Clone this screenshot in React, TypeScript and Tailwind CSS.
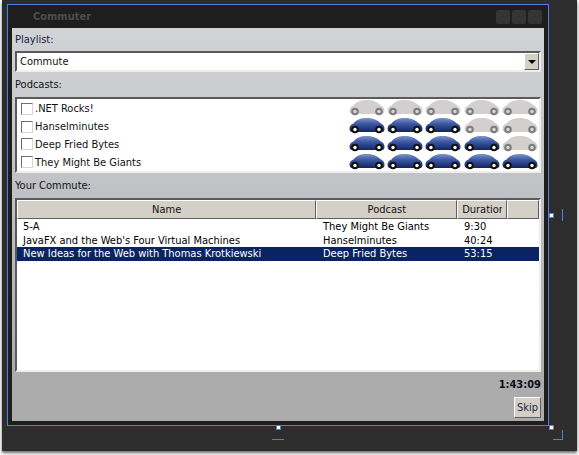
const podcasts = [
  { name: ".NET Rocks!", cars: 0 },
  { name: "Hanselminutes", cars: 3 },
  { name: "Deep Fried Bytes", cars: 4 },
  { name: "They Might Be Giants", cars: 5 },
];

const tracks = [
  { title: "5-A", podcast: "They Might Be Giants", duration: "9:30" },
  { title: "JavaFX and the Web's Four Virtual Machines", podcast: "Hanselminutes", duration: "40:24" },
  { title: "New Ideas for the Web with Thomas Krotkiewski", podcast: "Deep Fried Bytes", duration: "53:15", selected: true },
];

const sunken = "border-2 border-t-[#5a5a5a] border-l-[#5a5a5a] border-r-[#efeee8] border-b-[#efeee8] bg-white";
const raised = "border border-t-white border-l-white border-r-[#5f5f5f] border-b-[#5f5f5f] bg-[#d4d0c8]";

function Car({ on }: { on: boolean }) {
  const tyre = on ? "#111111" : "#7c7c7c";
  return (
    <svg width="36" height="17" viewBox="0 0 36 17" className="shrink-0">
      <path
        d="M0.5 10.5C0.5 8 2 6.5 4.5 5.5C7 2 11 0 18 0C25 0 29 2.5 32 5.5C34.5 6.5 35.5 8.5 35.5 11C35.5 13 34.5 14 33 14H3C1.5 14 0.5 12.5 0.5 10.5Z"
        fill={on ? "url(#car-blue)" : "#d4cfcf"}
      />
      <circle cx="6" cy="11.5" r="3.8" fill={tyre} />
      <circle cx="6" cy="11.5" r="1.7" fill={on ? "#ffffff" : "#d8d8d8"} />
      <circle cx="30" cy="11.5" r="3.8" fill={tyre} />
      <circle cx="30" cy="11.5" r="1.7" fill={on ? "#ffffff" : "#d8d8d8"} />
    </svg>
  );
}

function HeaderCell({ label, className, labelClass }: { label: string; className: string; labelClass?: string }) {
  return (
    <div className={`${raised} h-[19px] flex items-center justify-center whitespace-nowrap ${className}`}>
      <span className={labelClass}>{label}</span>
    </div>
  );
}

function Handle({ className }: { className: string }) {
  return <div className={`absolute w-[5px] h-[5px] bg-white border border-[#4f7fd8] ${className}`} />;
}

export default function App() {
  return (
    <div
      className="relative w-[579px] h-[455px] overflow-hidden bg-white text-[11px] leading-[13px] text-[#111]"
      style={{ fontFamily: '"DejaVu Sans Condensed", "Noto Sans", sans-serif' }}
    >
      <svg width="0" height="0" className="absolute">
        <defs>
          <linearGradient id="car-blue" x1="0" y1="0" x2="0" y2="1">
            <stop offset="0" stopColor="#7f94c8" />
            <stop offset="0.4" stopColor="#3e5aa5" />
            <stop offset="1" stopColor="#12245f" />
          </linearGradient>
        </defs>
      </svg>

      <div className="w-[575px] h-[451px] ml-[2px] bg-[#2d2d2d] shadow-[0_2px_3px_rgba(0,0,0,0.6)] pt-[4px] pl-[5px]">
        <div className="w-[542px] h-[422px] border border-[#4f7fd8] bg-[#1e1e1e] flex flex-col">
          {/* title bar */}
          <div className="h-[23px] shrink-0 flex items-center pl-[25px] pr-[6px]">
            <span className="font-bold text-[#4d4d4d]">Commuter</span>
            <div className="ml-auto flex gap-[2px]">
              <div className="w-[14px] h-[14px] rounded-[2px] bg-[#343434]" />
              <div className="w-[14px] h-[14px] rounded-[2px] bg-[#343434]" />
              <div className="w-[14px] h-[14px] rounded-[2px] bg-[#343434]" />
            </div>
          </div>

          {/* content panel */}
          <div className="mx-[4px] h-[393px] flex flex-col px-[3px] bg-gradient-to-b from-[#d2d3d7] via-[#bfc0c3] via-45% to-[#acacac] to-87%">
            <div className="h-[23px] flex items-center text-[#1a1a3a]">Playlist:</div>

            <div className={`${sunken} h-[21px] flex items-center justify-between pl-[3px] w-[526px]`}>
              <span>Commute</span>
              <div className={`${raised} w-[15px] h-[17px] flex items-center justify-center`}>
                <div className="w-0 h-0 border-x-[4px] border-x-transparent border-t-[4px] border-t-black" />
              </div>
            </div>

            <div className="h-[25px] flex items-center">Podcasts:</div>

            <div className={`${sunken} h-[76px] w-[526px] flex flex-col pl-[4px] pt-[1px]`}>
              {podcasts.map((p) => (
                <div key={p.name} className="h-[18px] flex items-center">
                  <div className="w-[12px] h-[12px] border border-t-[#6e6e6e] border-l-[#6e6e6e] border-r-[#d8d6ce] border-b-[#d8d6ce] bg-white" />
                  <span className="ml-[2px]">{p.name}</span>
                  <div className="ml-auto mr-[1px] flex gap-[2.3px]">
                    {[0, 1, 2, 3, 4].map((i) => (
                      <Car key={i} on={i < p.cars} />
                    ))}
                  </div>
                </div>
              ))}
            </div>

            <div className="h-[25px] flex items-center">Your Commute:</div>

            <div className={`${sunken} h-[174px] w-[526px] flex flex-col`}>
              <div className="flex bg-[#d4d0c8]">
                <HeaderCell label="Name" className="w-[300px]" />
                <HeaderCell label="Podcast" className="w-[141px]" />
                <HeaderCell
                  label="Duration"
                  className="w-[50px] justify-start pl-[4px]"
                  labelClass="block w-[40px] overflow-hidden"
                />
                <HeaderCell label="" className="w-[32px]" />
              </div>
              <div className="pt-[1px] text-black">
                {tracks.map((t) => (
                  <div
                    key={t.title}
                    className={`flex items-center h-[13.5px] ${t.selected ? "bg-[#0a2463] text-white" : ""}`}
                  >
                    <span className="w-[300px] pl-[6px] whitespace-nowrap">{t.title}</span>
                    <span className="w-[141px] pl-[6px] whitespace-nowrap">{t.podcast}</span>
                    <span className="pl-[6px]">{t.duration}</span>
                  </div>
                ))}
              </div>
            </div>

            <div className="flex-1 flex flex-col items-end">
              <div className="mt-[6px] font-bold text-[#0c0c1c]">1:43:09</div>
              <button className={`${raised} mt-[6px] w-[27px] h-[21px] flex items-center justify-center text-[#1a2a3a]`}>
                Skip
              </button>
            </div>
          </div>
        </div>
      </div>

      {/* designer selection adorners */}
      <Handle className="left-[276px] top-[425px]" />
      <Handle className="left-[549px] top-[213px]" />
      <Handle className="left-[549px] top-[425px]" />
      <div className="absolute left-[562px] top-[209px] w-px h-[12px] bg-[#4f7fd8]" />
      <div className="absolute left-[272px] top-[439px] w-[12px] h-px bg-[#4f7fd8]" />
      <div className="absolute left-[553px] top-[439px] w-[10px] h-px bg-[#4f7fd8]" />
      <div className="absolute left-[562px] top-[430px] w-px h-[10px] bg-[#4f7fd8]" />
    </div>
  );
}
